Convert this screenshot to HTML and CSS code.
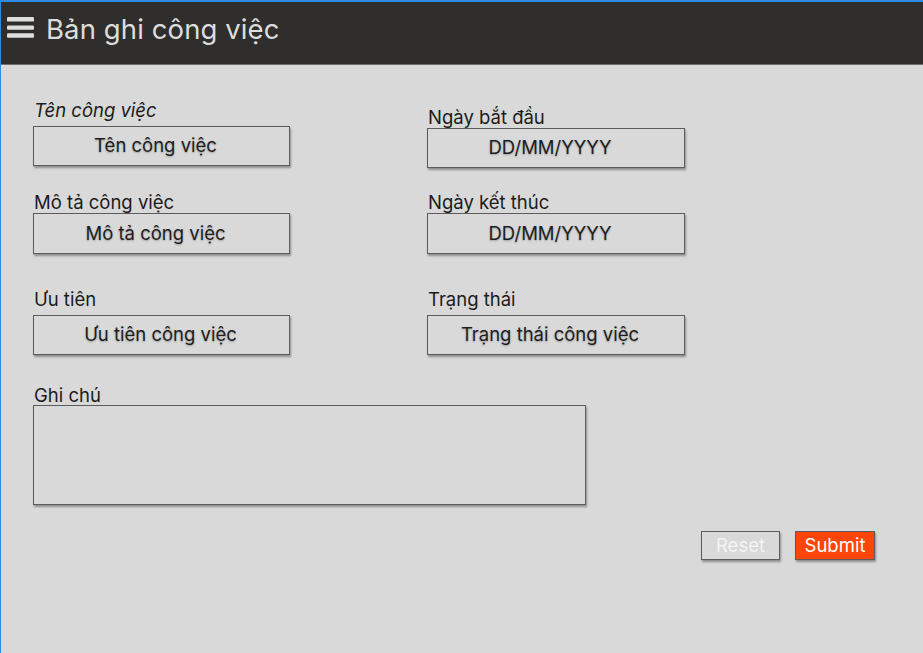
FILE: index.html
```html
<!DOCTYPE html>
<html lang="vi">
<head>
<meta charset="utf-8">
<title>Bản ghi công việc</title>
<link rel="stylesheet" href="styles.css">
</head>
<body>
<div class="page">
  <header class="topbar">
    <svg class="menu-icon" width="27" height="21" viewBox="0 0 27 21" aria-hidden="true">
      <rect x="0" y="0" width="27" height="4.6" rx="1.2" fill="#dedede"/>
      <rect x="0" y="8.6" width="27" height="4.2" rx="1.2" fill="#dedede"/>
      <rect x="0" y="16.2" width="27" height="4.6" rx="1.2" fill="#dedede"/>
    </svg>
    <h1 class="title">Bản ghi công việc</h1>
  </header>
  <main class="form">
    <div class="row row-1">
      <div class="field">
        <div class="label label-italic">Tên công việc</div>
        <div class="box box-first">Tên công việc</div>
      </div>
      <div class="field field-right field-right-1">
        <div class="label">Ngày bắt đầu</div>
        <div class="box box-tight">DD/MM/YYYY</div>
      </div>
    </div>
    <div class="row row-2">
      <div class="field">
        <div class="label">Mô tả công việc</div>
        <div class="box box-tight box-tall">Mô tả công việc</div>
      </div>
      <div class="field field-right">
        <div class="label">Ngày kết thúc</div>
        <div class="box box-tight box-tall">DD/MM/YYYY</div>
      </div>
    </div>
    <div class="row row-3">
      <div class="field">
        <div class="label">Ưu tiên</div>
        <div class="box box-gap box-shift">Ưu tiên công việc</div>
      </div>
      <div class="field field-right">
        <div class="label">Trạng thái</div>
        <div class="box box-gap">Trạng thái công việc</div>
      </div>
    </div>
    <div class="row row-4">
      <div class="field field-wide">
        <div class="label">Ghi chú</div>
        <div class="box note"></div>
      </div>
    </div>
    <div class="actions">
      <button class="btn btn-reset" type="button">Reset</button>
      <button class="btn btn-submit" type="button">Submit</button>
    </div>
  </main>
</div>
</body>
</html>
```

FILE: styles.css
```css
* { box-sizing: border-box; }

html, body {
  margin: 0;
  padding: 0;
  width: 923px;
  height: 653px;
  overflow: hidden;
  background: #d9d9d9;
}

.page {
  width: 923px;
  height: 653px;
  border-top: 2px solid #2d8be6;
  border-left: 1px solid #2d8be6;
  background: #d9d9d9;
  font-family: Inter, "Noto Sans", "Liberation Sans", sans-serif;
}

.topbar {
  height: 63px;
  background: #2f2e2c;
  border-bottom: 1px solid #6f6f6f;
  display: flex;
  align-items: flex-start;
  padding-left: 6px;
}

.menu-icon {
  display: block;
  margin-top: 15px;
}

.title {
  margin: 9px 0 0 12px;
  font-weight: 400;
  font-size: 27.5px;
  line-height: 36px;
  letter-spacing: 0.1px;
  color: #dddddd;
}

.form {
  padding: 35px 0 0 32px;
}

.row {
  display: flex;
  gap: 137px;
  align-items: flex-start;
}

.row-2 { margin-top: 24px; }
.row-3 { margin-top: 35px; }
.row-4 { margin-top: 30px; }

.field {
  width: 257px;
  display: flex;
  flex-direction: column;
}

.field-right { width: 258px; }

.field-right-1 { padding-top: 7px; }

.field-wide { width: 553px; }

.label {
  font-size: 18.5px;
  line-height: 20px;
  color: #1b1b1b;
  padding-left: 1px;
}

.label-italic { font-style: italic; }

.box {
  height: 40px;
  border: 1px solid #5c5c5c;
  box-shadow: 1px 1.5px 2px rgba(0, 0, 0, 0.35);
  display: flex;
  align-items: center;
  justify-content: center;
  font-size: 18.5px;
  color: #1e1e1e;
  text-shadow: 0 1px 2px rgba(0, 0, 0, 0.28);
  padding: 0 12px 2px 0;
}

.box-first { margin-top: 6px; }
.box-tight { margin-top: 1px; }
.box-tall { height: 41px; }
.box-gap { margin-top: 6px; }
.box-shift { padding-right: 2px; }

.note {
  height: 100px;
  margin-top: 0;
}

.actions {
  display: flex;
  justify-content: flex-end;
  gap: 15px;
  margin-top: 26px;
  padding-right: 48px;
}

.btn {
  height: 29px;
  width: 80px;
  border: 1px solid #5c5c5c;
  box-shadow: 1px 1.5px 2px rgba(0, 0, 0, 0.35);
  font-family: Inter, "Noto Sans", "Liberation Sans", sans-serif;
  font-size: 18.5px;
  line-height: 1;
  padding: 0 0 1px 0;
  cursor: pointer;
}

.btn-reset {
  background: #d9d9d9;
  color: #f4f4f4;
  width: 79px;
}

.btn-submit {
  background: #fc4509;
  color: #ffffff;
}
```
